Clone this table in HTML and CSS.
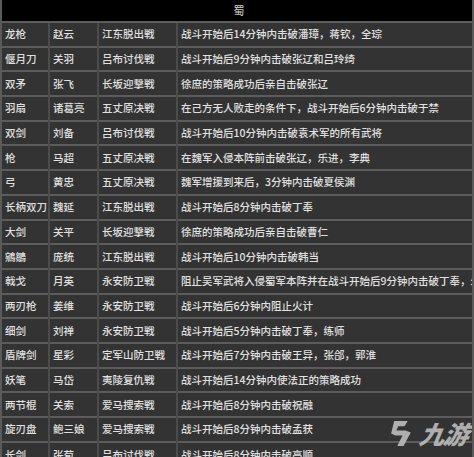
FILE: index.html
```html
<!DOCTYPE html>
<html lang="zh-CN">
<head>
<meta charset="utf-8">
<link rel="stylesheet" href="styles.css">
</head>
<body>
<div class="sheet">
  <div class="head">蜀</div>
  <table class="list">
    <colgroup><col class="c1"><col class="c2"><col class="c3"><col class="c4"></colgroup>
    <tbody>
      <tr><td>龙枪</td><td>赵云</td><td>江东脱出戦</td><td>战斗开始后14分钟内击破潘璋，蒋钦，全琮</td></tr>
      <tr><td>偃月刀</td><td>关羽</td><td>吕布讨伐戦</td><td>战斗开始后9分钟内击破张辽和吕玲绮</td></tr>
      <tr><td>双矛</td><td>张飞</td><td>长坂迎撃戦</td><td>徐庶的策略成功后亲自击破张辽</td></tr>
      <tr><td>羽扇</td><td>诸葛亮</td><td>五丈原决戦</td><td>在己方无人败走的条件下，战斗开始后6分钟内击破于禁</td></tr>
      <tr><td>双剑</td><td>刘备</td><td>吕布讨伐戦</td><td>战斗开始后10分钟内击破袁术军的所有武将</td></tr>
      <tr><td>枪</td><td>马超</td><td>五丈原决戦</td><td>在魏军入侵本阵前击破张辽，乐进，李典</td></tr>
      <tr><td>弓</td><td>黄忠</td><td>五丈原决戦</td><td>魏军增援到来后，3分钟内击破夏侯渊</td></tr>
      <tr><td>长柄双刀</td><td>魏延</td><td>江东脱出戦</td><td>战斗开始后8分钟内击破丁奉</td></tr>
      <tr><td>大剑</td><td>关平</td><td>长坂迎撃戦</td><td>徐庶的策略成功后亲自击破曹仁</td></tr>
      <tr><td>鵷鶵</td><td>庞统</td><td>江东脱出戦</td><td>战斗开始后10分钟内击破韩当</td></tr>
      <tr><td>戟戈</td><td>月英</td><td>永安防卫戦</td><td>阻止吴军武将入侵蜀军本阵并在战斗开始后9分钟内击破丁奉，朱桓</td></tr>
      <tr><td>两刃枪</td><td>姜维</td><td>永安防卫戦</td><td>战斗开始后6分钟内阻止火计</td></tr>
      <tr><td>细剑</td><td>刘禅</td><td>永安防卫戦</td><td>战斗开始后5分钟内击破丁奉，练师</td></tr>
      <tr><td>盾牌剑</td><td>星彩</td><td>定军山防卫戦</td><td>战斗开始后7分钟内击破王异，张郃，郭淮</td></tr>
      <tr><td>妖笔</td><td>马岱</td><td>夷陵复仇戦</td><td>战斗开始后14分钟内使法正的策略成功</td></tr>
      <tr><td>两节棍</td><td>关索</td><td>爱马捜索戦</td><td>战斗开始后8分钟内击破祝融</td></tr>
      <tr><td>旋刃盘</td><td>鲍三娘</td><td>爱马捜索戦</td><td>战斗开始后8分钟内击破孟获</td></tr>
      <tr><td>长剑</td><td>张苞</td><td>吕布讨伐戦</td><td>战斗开始后8分钟内击破高顺</td></tr>
    </tbody>
  </table>
  <div class="watermark">
    <svg class="wm-icon" viewBox="0 0 28 26" width="29" height="27">
      <path d="M6 1 H19 L16 6 H10 L8 10 H17 L22 12 L15 25 H9 L14 15 H7 L3 13 Z" fill="#c4c4c4"/>
    </svg>
    <span class="wm-text">九游</span>
  </div>
</div>
</body>
</html>
```
FILE: styles.css
```css
html, body {
  margin: 0;
  padding: 0;
  background: #2f2f2f;
}
.sheet {
  position: relative;
  width: 474px;
  height: 457px;
  overflow: hidden;
  box-sizing: border-box;
  border-left: 2px solid #5a5a5a;
  border-right: 2px solid #5a5a5a;
  font-family: "Noto Sans CJK SC", "Noto Sans", sans-serif;
}
.head {
  height: 21px;
  background: #000;
  color: #d0d0d0;
  font-size: 11px;
  line-height: 21px;
  text-align: center;
  padding-left: 4px;
}
.list {
  width: 470px;
  border-collapse: collapse;
  table-layout: fixed;
  font-size: 10.5px;
  font-weight: 500;
  color: #e0e0e0;
}
.c1 { width: 47px; }
.c2 { width: 49px; }
.c3 { width: 79px; }
.c4 { width: 295px; }
.list td {
  padding: 0 0 0 3px;
  border-top: 2px solid #5c5c5c;
  border-left: 2px solid #4c4c4c;
  background: #333;
  white-space: nowrap;
  overflow: hidden;
  line-height: 22px;
  box-sizing: border-box;
}
.list td:first-child {
  border-left: none;
}
.list tr td { height: 24.7px; }
.watermark {
  position: absolute;
  right: 4px;
  bottom: 10px;
  display: flex;
  align-items: center;
  gap: 3px;
  opacity: 0.85;
}
.wm-text {
  font-size: 25px;
  font-weight: 900;
  font-style: italic;
  color: #c4c4c4;
  line-height: 27px;
  letter-spacing: -1px;
  transform: skewX(-10deg);
}
```
